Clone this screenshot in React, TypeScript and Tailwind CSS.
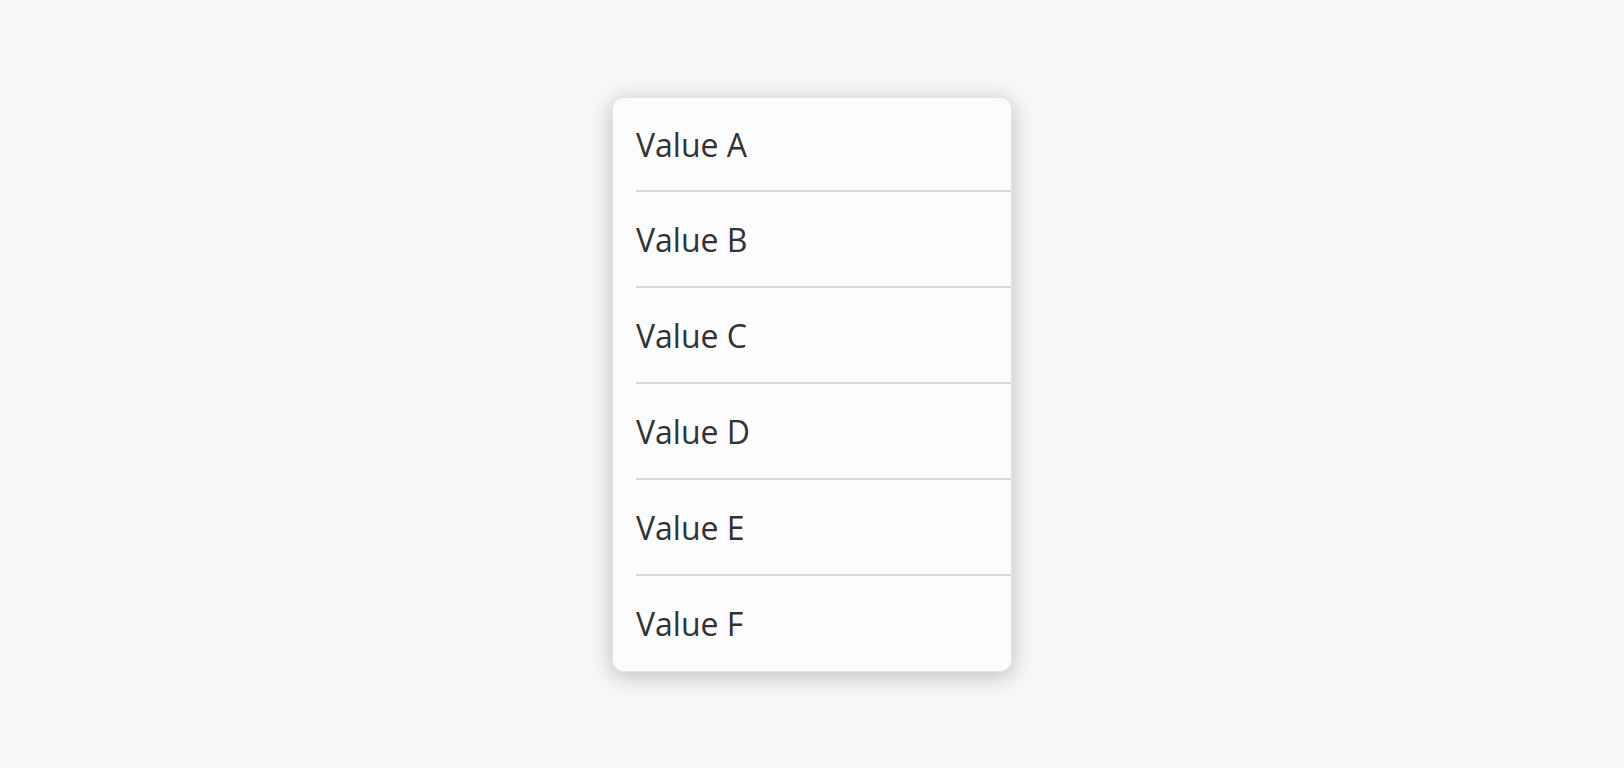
const values = ['Value A', 'Value B', 'Value C', 'Value D', 'Value E', 'Value F']

export default function App() {
  return (
    <div className="flex h-screen w-full items-center justify-center bg-[#f7f7f7] font-['Open_Sans',sans-serif]">
      <div className="w-[400px] overflow-hidden rounded-xl border border-[#e4e4e4] bg-[#fcfcfc] shadow-[0_4px_22px_rgba(0,0,0,0.24)]">
        {values.map((v, i) => (
          <div
            key={v}
            className={
              'ml-[23px] box-content flex items-center pt-[2px] text-[32px] text-[#333333] ' +
              (i === 0 ? 'h-[90px] ' : i === values.length - 1 ? 'h-[93px] ' : 'h-[92px] ') +
              (i < values.length - 1 ? 'border-b-2 border-[#d6d6d6]' : '')
            }
          >
            {v}
          </div>
        ))}
      </div>
    </div>
  )
}
